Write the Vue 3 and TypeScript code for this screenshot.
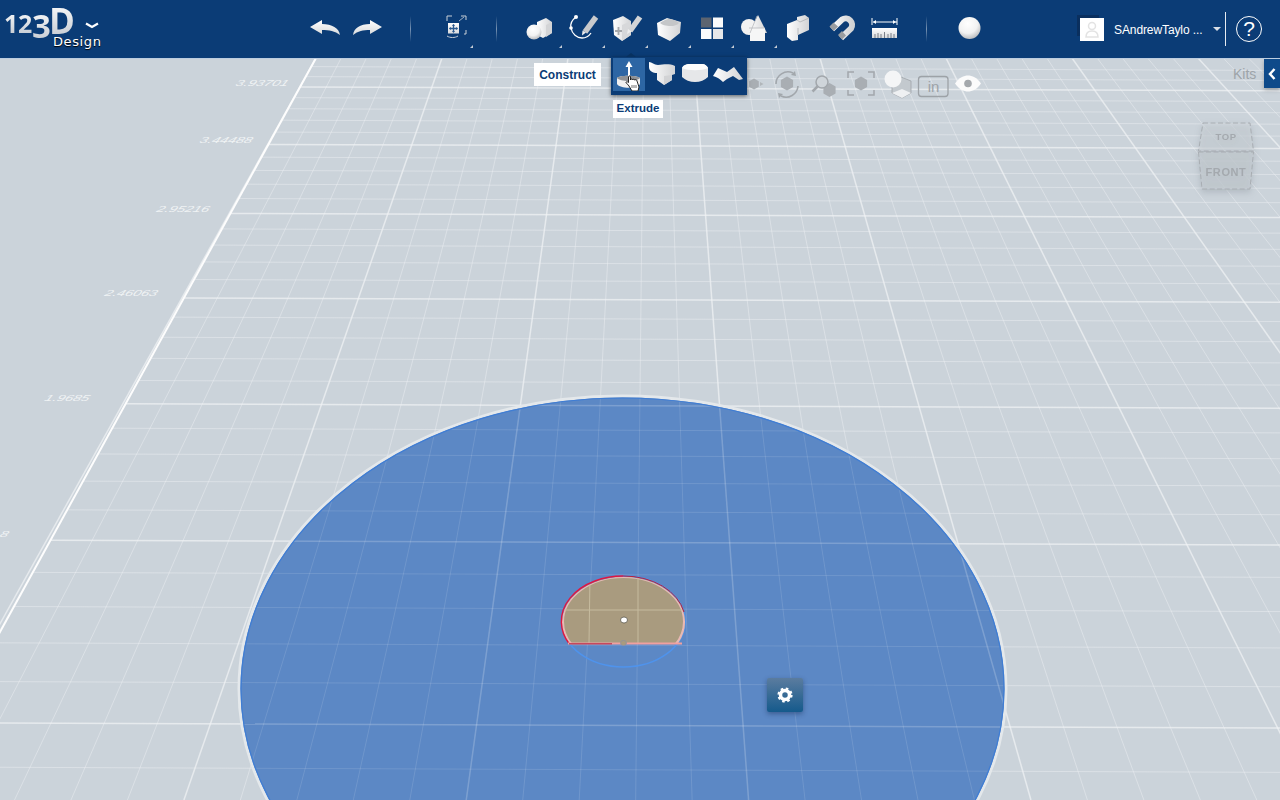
<script setup lang="ts">
interface Seg { x1: number; y1: number; x2: number; y2: number; major: boolean }
const VY = -540
const VX = 650
const leftAt = (y: number) => 316 - 0.55 * (y - 58)
const verticals: Seg[] = []
for (let n = 0; n <= 70; n++) {
  const x58 = 316 + 25.2 * n
  const xAt = (y: number) => VX + (x58 - VX) * (y - VY) / (58 - VY)
  verticals.push({ x1: x58, y1: 58, x2: xAt(800), y2: 800, major: n % 5 === 0 })
}
const horizontals: Seg[] = []
for (let k = 0; k <= 38; k++) {
  const y = 1 / (0.001595 - 0.00002677 * (k - 5)) + VY
  if (y < 58) continue
  const x = leftAt(y)
  horizontals.push({ x1: x, y1: y, x2: 1280, y2: y + (1280 - x) * 0.004, major: k % 5 === 0 })
}
const grid = [...verticals, ...horizontals]
const labels = [
  { t: '3.93701', x: 261, y: 86 },
  { t: '3.44488', x: 225, y: 143 },
  { t: '2.95216', x: 182, y: 212 },
  { t: '2.46063', x: 130, y: 296 },
  { t: '1.9685', x: 66, y: 401 },
  { t: '8', x: 3, y: 537 }
]
const hex = (cx: number, cy: number, r: number) =>
  [[0, -1], [0.87, -0.5], [0.87, 0.5], [0, 1], [-0.87, 0.5], [-0.87, -0.5]]
    .map(([a, b]) => `${cx + a * r},${cy + b * r}`).join(' ')
const corners = [559, 602, 645, 688, 731, 774]
</script>

<template>
  <div class="app">
    <svg class="defs" width="0" height="0">
      <defs>
        <linearGradient id="lg" x1="0" y1="0" x2="0" y2="1">
          <stop offset="0" stop-color="#ffffff" />
          <stop offset="1" stop-color="#d8dadc" />
        </linearGradient>
        <linearGradient id="lh" x1="0" y1="0" x2="1" y2="0">
          <stop offset="0" stop-color="#ffffff" />
          <stop offset="1" stop-color="#d2d3d5" />
        </linearGradient>
        <radialGradient id="ball" cx=".42" cy=".3" r=".8">
          <stop offset="0" stop-color="#ffffff" />
          <stop offset=".55" stop-color="#f2f2f2" />
          <stop offset="1" stop-color="#a9abae" />
        </radialGradient>
      </defs>
    </svg>

    <header class="bar">
      <div class="logo">
        <span class="dg d12">12</span><span class="dg d3">3</span><span class="dg dee">D</span>
        <svg class="chev" viewBox="0 0 14 7" width="14" height="7"><path d="M1 1.500 7 5l6-3.500" fill="none" stroke="#fff" stroke-width="2.200" /></svg>
        <span class="design">Design</span>
      </div>

      <svg class="ic w42" viewBox="304 9 42 40"><path d="M310 27 322 20v4c10 0 17 4 18 11-5-4-11-5-18-5v4z" fill="url(#lg)" /></svg>
      <svg class="ic w42" viewBox="346 9 42 40"><path d="M382 27 370 20v4c-10 0-16 4-17 11 5-4 10-5 17-5v4z" fill="url(#lg)" /></svg>
      <i class="sep s1"></i>
      <svg class="ic nav" viewBox="435 9 40 40">
        <path d="M447 21v-5h5M461 16h5v4M466 30v4h-2M447 36c3 2 8 2 11 0" fill="none" stroke="#c8ced6" stroke-width="1" />
        <path d="M459 21l5-4" stroke="#9fb0c4" stroke-width="1" />
        <rect x="448" y="23" width="11" height="10.500" fill="url(#lg)" />
        <path d="M453.500 24.500v7.500M449.500 28.500h8" stroke="#2b5a90" stroke-width="1.300" />
        <path d="M453.500 24l-1.500 2h3zM453.500 33l-1.500-2h3zM449 28.500l2-1.500v3zM458 28.500l-2-1.500v3z" fill="#2b5a90" />
        <path d="M470 48h3v-3z" fill="#c5ccd6" />
      </svg>
      <i class="sep s2"></i>

      <svg class="ic w43" viewBox="519 9 43 40">
        <path d="M537 22l9-4 6 4v11l-9 5-6-3z" fill="url(#lh)" />
        <path d="M546 25l6-3v11l-6 4z" fill="#d3d4d6" />
        <circle cx="534" cy="32" r="7.500" fill="url(#ball)" />
        <path :d="`M${corners[0]} 48h3v-3z`" fill="#c5ccd6" />
      </svg>
      <svg class="ic w43" viewBox="562 9 43 40">
        <path d="M576 17c-4 3-6 7-5 11 1 6 6 10 11 10 4 0 7-2 9-5" fill="none" stroke="#fff" stroke-width="1.300" />
        <circle cx="576" cy="17" r="2" fill="#fff" /><circle cx="571" cy="28" r="1.800" fill="#fff" />
        <path d="M596 17l-11 15" stroke="#c9cacc" stroke-width="5.500" />
        <path d="M582.500 30.500l-.5 5 4-3z" fill="#eee" />
        <path :d="`M${corners[1]} 48h3v-3z`" fill="#c5ccd6" />
      </svg>
      <svg class="ic w43" viewBox="605 9 43 40">
        <path d="M613 20l10-4 8 5v14l-9 6-8-6z" fill="url(#lh)" />
        <path d="M622 25l9-4v14l-9 6z" fill="#d7d8da" />
        <path d="M615 31h7M618.500 27v8" stroke="#a6a8ab" stroke-width="1.800" />
        <path d="M640 17l-10 14" stroke="#d4d5d7" stroke-width="5.500" />
        <path d="M628 29l-1 5 4.500-2.500z" fill="#eee" />
        <path :d="`M${corners[2]} 48h3v-3z`" fill="#c5ccd6" />
      </svg>
      <svg class="ic w43" viewBox="648 9 43 40">
        <path d="M657 23l10-5 14 4-1 11-10 8-12-6z" fill="url(#lh)" />
        <path d="M660 23c3 3 15 5 19 0-2-2-6-4-11-4-3 1-6 2-8 4z" fill="#c4c6c8" />
        <path :d="`M${corners[3]} 48h3v-3z`" fill="#c5ccd6" />
      </svg>
      <svg class="ic w43" viewBox="691 9 43 40">
        <rect x="701" y="17.500" width="10.500" height="10" fill="#5c6470" />
        <rect x="713" y="17.500" width="10" height="10" fill="#fbfbfb" />
        <rect x="701" y="29" width="10.500" height="10" fill="#fbfbfb" />
        <rect x="713" y="29" width="10" height="10" fill="#e6e7e9" />
        <path :d="`M${corners[4]} 48h3v-3z`" fill="#c5ccd6" />
      </svg>
      <svg class="ic w43" viewBox="734 9 43 40">
        <circle cx="749" cy="27" r="8" fill="#f2f2f2" />
        <path d="M758 15l9 18h-18z" fill="url(#lh)" />
        <rect x="750" y="28" width="15" height="13" fill="#f6f6f6" />
        <path d="M749 28h16M757 16l-7 17" stroke="#b7b9bc" stroke-width=".8" fill="none" />
        <path :d="`M${corners[5]} 48h3v-3z`" fill="#c5ccd6" />
      </svg>
      <svg class="ic w43" viewBox="777 9 43 40">
        <path d="M787 24l10-4v-3l8-2 4 3v12l-11 5v5l-6 1-5-4z" fill="url(#lh)" />
        <path d="M797 20l3 2 9-4M798 35v-7" stroke="#b0b2b5" stroke-width=".8" fill="none" />
      </svg>
      <svg class="ic w43" viewBox="820 9 43 40">
        <path d="M832 29l10-9.500a6.500 6.500 0 0 1 9 9L841 38" fill="none" stroke="url(#lh)" stroke-width="6" />
        <path d="M829.500 26.500l4-4 4.500 4-4.500 4.500zM838 35l4-4 4 4.500-4 4z" fill="#9b9da0" />
      </svg>
      <svg class="ic w43" viewBox="863 9 43 40">
        <path d="M873 22h24M872 18v7M897 18v7" stroke="#fff" stroke-width="1" />
        <path d="M873 22l3-2v4zM896 22l-3-2v4z" fill="#fff" />
        <rect x="872" y="28" width="25" height="10" fill="url(#lg)" />
        <path d="M875 38v-4M878 38v-5M881 38v-4M884.500 38v-6M888 38v-4M891 38v-5M894 38v-4" stroke="#5f6670" stroke-width=".8" />
      </svg>
      <i class="sep s3"></i>
      <svg class="ic ball" viewBox="949 9 41 40"><circle cx="969.500" cy="28" r="11" fill="url(#ball)" /></svg>

      <div class="user">
        <span class="avatar">
          <svg viewBox="0 0 24 23" width="24" height="23"><circle cx="12" cy="8" r="3.500" fill="none" stroke="#e3e3e3" stroke-width="1.500" /><path d="M6 19c0-5 3-6 6-6s6 1 6 6z" fill="none" stroke="#e3e3e3" stroke-width="1.500" /></svg>
        </span>
        <span class="name">SAndrewTaylo ...</span>
        <span class="caret"></span>
        <i class="sep2"></i>
        <span class="help">?</span>
      </div>
    </header>

    <main class="view">
      <svg class="scene" viewBox="0 58 1280 742" width="1280" height="742">
        <defs>
          <clipPath id="disk"><ellipse cx="622.500" cy="689" rx="382" ry="291.500" /></clipPath>
          <clipPath id="cap"><path d="M569 643.500A61.500 45.500 0 1 1 678 643.500Z" /></clipPath>
        </defs>
        <line v-for="(s, i) in grid" :key="i" :x1="s.x1" :y1="s.y1" :x2="s.x2" :y2="s.y2" :class="s.major ? 'maj' : 'min'" />
        <line x1="316" y1="58" x2="-5" y2="641" class="edge" />
        <text v-for="l in labels" :key="l.t" class="lab" :transform="`translate(${l.x} ${l.y}) skewX(-26) scale(1 .6)`">{{ l.t }}</text>

        <ellipse cx="622.500" cy="689" rx="383.500" ry="293" fill="none" stroke="#e4e8eb" stroke-width="3" />
        <ellipse cx="622.500" cy="689" rx="382" ry="291.500" fill="#5c88c5" />
        <g clip-path="url(#disk)">
          <line v-for="(s, i) in grid" :key="'d' + i" :x1="s.x1" :y1="s.y1" :x2="s.x2" :y2="s.y2" :class="s.major ? 'dmaj' : 'dmin'" />
        </g>
        <ellipse cx="622.500" cy="689" rx="381.500" ry="291" fill="none" stroke="#3f7dd4" stroke-width="1.200" />

        <ellipse cx="623.500" cy="621.500" rx="61.500" ry="45.500" fill="none" stroke="#4f93ec" stroke-width="1.600" />
        <g clip-path="url(#cap)">
          <ellipse cx="623.500" cy="621.500" rx="61.500" ry="45.500" fill="#a99b7f" stroke="#e8b9b4" stroke-width="4" />
          <line x1="590" y1="575" x2="589" y2="643" class="capl" />
          <line x1="638" y1="575" x2="638" y2="643" class="capl" />
          <line x1="560" y1="610" x2="690" y2="610" class="capl" />
        </g>
        <path d="M569 643.500A61.500 45.500 0 0 1 623.500 576" fill="none" stroke="#e0163f" stroke-width="1.400" />
        <path d="M623.500 576A61.500 45.500 0 0 1 684 612" fill="none" stroke="#b5213f" stroke-width="1" />
        <path d="M568 643.500h114" stroke="#f0a0a0" stroke-width="2" />
        <path d="M569 643.800h43" stroke="#b5213f" stroke-width="1" />
        <ellipse cx="624" cy="620" rx="3.500" ry="3" fill="#fff" stroke="#4d4a3f" stroke-width=".7" />
        <ellipse cx="623.500" cy="643" rx="3" ry="2.500" fill="#a99b7f" stroke="#8a91a3" stroke-width=".7" />
      </svg>

      <svg class="vc" viewBox="748 66 240 36" width="240" height="36">
        <g class="soft">
          <polygon :points="hex(754, 84, 5.500)" fill="#a9aeb3" />
          <path d="M760 82l3.500 2-3.500 2z" fill="#b1b6ba" />
          <polygon :points="hex(787, 83.500, 7)" fill="#a9aeb3" />
          <path d="M776 84a12 12 0 0 1 17-11M798 86a12 12 0 0 1-17 10" fill="none" stroke="#a2a7ac" stroke-width="1.600" />
          <path d="M795 71l1 5-5-1zM779 98l-1-5 5 1z" fill="#a2a7ac" />
          <polygon :points="hex(829.500, 90, 7)" fill="#a9aeb3" />
          <circle cx="822" cy="82" r="6" fill="#cfd5da" stroke="#a2a7ac" stroke-width="1.500" />
          <path d="M817.500 86.500l-5 5" stroke="#a2a7ac" stroke-width="2.500" />
          <path d="M848 78v-6h6M868 72h6v6M874 90v5h-6M854 95h-6v-5" fill="none" stroke="#a2a7ac" stroke-width="1.500" />
          <polygon :points="hex(861, 83.500, 7)" fill="#a9aeb3" />
          <path d="M892 82l9-5 10 4v12l-9 5-10-5z" fill="#c3c9ce" stroke="#9ea3a8" stroke-width=".8" />
          <path d="M892 93l10-4 9 4-9 5z" fill="#eef0f2" />
          <circle cx="893" cy="79" r="8.500" fill="#f4f5f6" />
          <rect x="918.500" y="76.500" width="29.500" height="20" rx="3" fill="none" stroke="#9da2a7" stroke-width="1.300" />
          <path d="M955 83.500c4-6 9-8 13-8s9 2 13 8c-4 6-9 8-13 8s-9-2-13-8z" fill="#fbfbfb" />
          <circle cx="968" cy="83.500" r="3.800" fill="#a4a8ac" />
        </g>
        <text x="933.500" y="91.500" class="inl">in</text>
      </svg>

      <span class="kits">Kits</span>
      <span class="tab"><svg viewBox="0 0 10 14" width="10" height="14"><path d="M7.500 2 3 7l4.500 5" fill="none" stroke="#fff" stroke-width="2.500" /></svg></span>

      <svg class="cube" viewBox="1195 120 64 76" width="64" height="76">
        <path d="M1203 123h47l3.500 28h-55z" fill="#cdd3d9" fill-opacity=".6" stroke="#a8adb2" stroke-dasharray="5 2.500" />
        <path d="M1198.500 152h55l-3.500 37h-48z" fill="#c5ccd2" fill-opacity=".7" stroke="#a8adb2" stroke-dasharray="5 2.500" />
        <text x="1226" y="139.500" class="ct">TOP</text>
        <text x="1226" y="176" class="cf">FRONT</text>
      </svg>

      <div class="tip construct">Construct</div>
      <div class="popup">
        <span class="pop-arrow"></span>
        <div class="item active">
          <svg viewBox="613 59 32 33" width="32" height="33">
            <path d="M617 79c2-3 20-3 23 0v6c-3 5-20 5-23 0z" fill="#f0f0f0" />
            <path d="M617 79c2-3 20-3 23 0-3 4-20 4-23 0z" fill="#8f9296" />
            <path d="M629 78V67" stroke="#fff" stroke-width="2" />
            <path d="M629 62l-3.500 6h7z" fill="#fff" />
            <path d="M632 92l-3-5c-1-1.500-3-3-3-3.500 0-1 1.500-1 2.500 0V78c0-1.500 2-1.500 2 0v3c.3-1.300 2-1.300 2.200 0 .3-1.100 2-1 2.100.2.500-.9 2-.7 2.100.5L639 88l-1 4z" fill="#fff" stroke="#111" stroke-width=".9" />
            <path d="M632 86v3M634 86v3M636 86v3" stroke="#111" stroke-width=".6" />
          </svg>
        </div>
        <svg class="pi" viewBox="646 59 32 33" width="32" height="33">
          <path d="M649 63c3 0 5 3 9 3 5 0 10-2 17 1v8l-3 1v5l-8 5-7-5v-7c-4 0-8-2-8-6z" fill="url(#lh)" />
          <path d="M664 86v-9l8-1v5z" fill="#d2d3d5" />
        </svg>
        <svg class="pi" viewBox="678 59 32 33" width="32" height="33">
          <path d="M682 69c1-2 3-4 9-4h11c3 0 5 2 6 4v9c-3 3-8 5-13 5s-10-2-13-5z" fill="#e6e7e9" />
          <path d="M682 69c1-2 3-4 9-4h11c3 0 5 2 6 4-6 3-20 3-26 0z" fill="#fdfdfd" />
        </svg>
        <svg class="pi" viewBox="710 59 35 33" width="35" height="33">
          <path d="M713 77l5-8 9 4 7-5 9 12-4 1-6-4-6 3-4 3c-3-3-6-5-10-6z" fill="url(#lh)" />
        </svg>
      </div>
      <div class="tip extrude">Extrude</div>

      <div class="gear">
        <svg viewBox="0 0 16 16" width="16" height="16">
          <circle cx="8" cy="8" r="4.500" fill="none" stroke="#fff" stroke-width="3.500" />
          <circle cx="8" cy="8" r="6.400" fill="none" stroke="#fff" stroke-width="2.400" stroke-dasharray="2.500 2.530" />
        </svg>
      </div>
    </main>
  </div>
</template>

<style>
html, body { margin: 0; padding: 0; background: #cbd3da; }
</style>

<style scoped>
.app { width: 1280px; height: 800px; overflow: hidden; display: flex; flex-direction: column; font-family: "Liberation Sans", Arial, sans-serif; }
.defs { position: absolute; }
.bar { height: 58px; flex: 0 0 58px; background: #0b3c76; display: flex; align-items: center; position: relative; z-index: 1; box-shadow: 0 1px 0 #bccde0; }
.logo { flex: 0 0 304px; height: 58px; position: relative; color: #fff; }
.dg { position: absolute; background: linear-gradient(#ffffff, #bfc5cd); -webkit-background-clip: text; background-clip: text; color: transparent; }
.d12 { left: 4px; top: 8px; font: 700 25px/30px "Open Sans", "Liberation Sans", sans-serif; letter-spacing: -.2px; }
.d3 { left: 32px; top: 7px; font: 700 33px/38px "Open Sans", "Liberation Sans", sans-serif; letter-spacing: -1px; }
.dee { left: 49px; top: 0; font: 700 35px/42px "Open Sans", "Liberation Sans", sans-serif; }
.chev { position: absolute; left: 85px; top: 21.500px; }
.design { position: absolute; left: 53px; top: 35px; font: 400 13px/14px "DejaVu Sans", sans-serif; letter-spacing: .6px; text-shadow: 0 1px 1px #000; }
.ic { height: 40px; flex: none; display: block; }
.w42 { width: 42px; }
.w43 { width: 43px; }
.nav { width: 40px; margin-left: 24px; }
.ball { width: 41px; margin-left: 22px; }
.sep { width: 1px; height: 26px; flex: none; background: linear-gradient(rgba(255,255,255,0), rgba(255,255,255,.45), rgba(255,255,255,0)); }
.s1 { margin-left: 22px; }
.s2 { margin-left: 21px; margin-right: 22px; }
.s3 { margin-left: 20px; }
.user { margin-left: auto; display: flex; align-items: center; height: 58px; }
.avatar { width: 24px; height: 23px; background: #fff; display: block; margin-right: 10px; box-shadow: -4px -4px 0 -1px #0a2f5e; }
.avatar svg { display: block; }
.name { color: #fff; font-size: 12px; letter-spacing: -.1px; width: 99px; white-space: nowrap; position: relative; top: 1px; }
.caret { width: 0; height: 0; border: 4px solid transparent; border-top: 4px solid #d9dfe7; border-bottom: 0; margin-right: 4px; }
.sep2 { width: 1px; height: 34px; background: #e6ebf1; margin-right: 10px; }
.help { width: 24px; height: 24px; border: 1.300px solid #fff; border-radius: 50%; color: #fff; font: 400 21px/24px "Liberation Sans", sans-serif; text-align: center; margin-right: 18px; }

.view { flex: 1; position: relative; background: #cbd3da; }
.scene { position: absolute; left: 0; top: 0; display: block; }
.min { stroke: #eef1f4; stroke-width: .9; opacity: .5; }
.maj { stroke: #f2f4f6; stroke-width: 1.500; opacity: .7; }
.edge { stroke: #fdfdfd; stroke-width: 2; }
.dmin { stroke: #fff; stroke-width: .9; opacity: .13; }
.dmaj { stroke: #fff; stroke-width: 1.500; opacity: .2; }
.capl { stroke: #c6bb9f; stroke-width: 1; }
.lab { font: italic 400 14.500px "Liberation Sans", sans-serif; fill: #eff2f4; text-anchor: middle; }
.vc { position: absolute; left: 748px; top: 8px; display: block; }
.soft { filter: blur(.35px); }
.inl { font: 400 15px "Liberation Sans", sans-serif; fill: #9da2a7; text-anchor: middle; }
.kits { position: absolute; left: 1233px; top: 8px; color: #9ea4a9; font-size: 14px; }
.tab { position: absolute; left: 1264px; top: 1px; width: 16px; height: 29px; background: #0e4a8a; display: flex; align-items: center; justify-content: center; box-shadow: 0 2px 4px rgba(0,0,0,.25); }
.cube { position: absolute; left: 1195px; top: 62px; display: block; filter: drop-shadow(0 3px 3px rgba(90,100,110,.3)); }
.ct, .cf { font-weight: 700; fill: #a4a9ae; text-anchor: middle; letter-spacing: .6px; }
.ct { font-size: 9.500px; }
.cf { font-size: 11px; }
.tip { position: absolute; background: #fff; color: #0b3c76; font-weight: 700; font-size: 12px; line-height: 1; display: flex; align-items: center; justify-content: center; box-sizing: border-box; }
.construct { left: 534px; top: 5px; width: 67px; height: 23px; }
.extrude { left: 613px; top: 42px; width: 50px; height: 18px; font-size: 11.500px; }
.popup { position: absolute; left: 611px; top: -1px; width: 136px; height: 38px; background: #0b3c76; display: flex; align-items: flex-start; padding: 1px 2px 0; box-sizing: border-box; box-shadow: 0 1px 4px rgba(0,0,0,.55); z-index: 2; }
.pop-arrow { position: absolute; left: 15px; top: -4px; width: 0; height: 0; border: 5px solid transparent; border-top: 0; border-bottom: 4px solid #08315f; }
.item.active { width: 32px; height: 33px; background: #2d66a4; margin-right: 1px; }
.item svg, .pi { display: block; }
.gear { position: absolute; left: 767px; top: 620px; width: 36px; height: 34px; border-radius: 2px; background: linear-gradient(#5b7c9f, #155a8c); display: flex; align-items: center; justify-content: center; box-shadow: 0 2px 5px rgba(20,40,80,.45); }
</style>
